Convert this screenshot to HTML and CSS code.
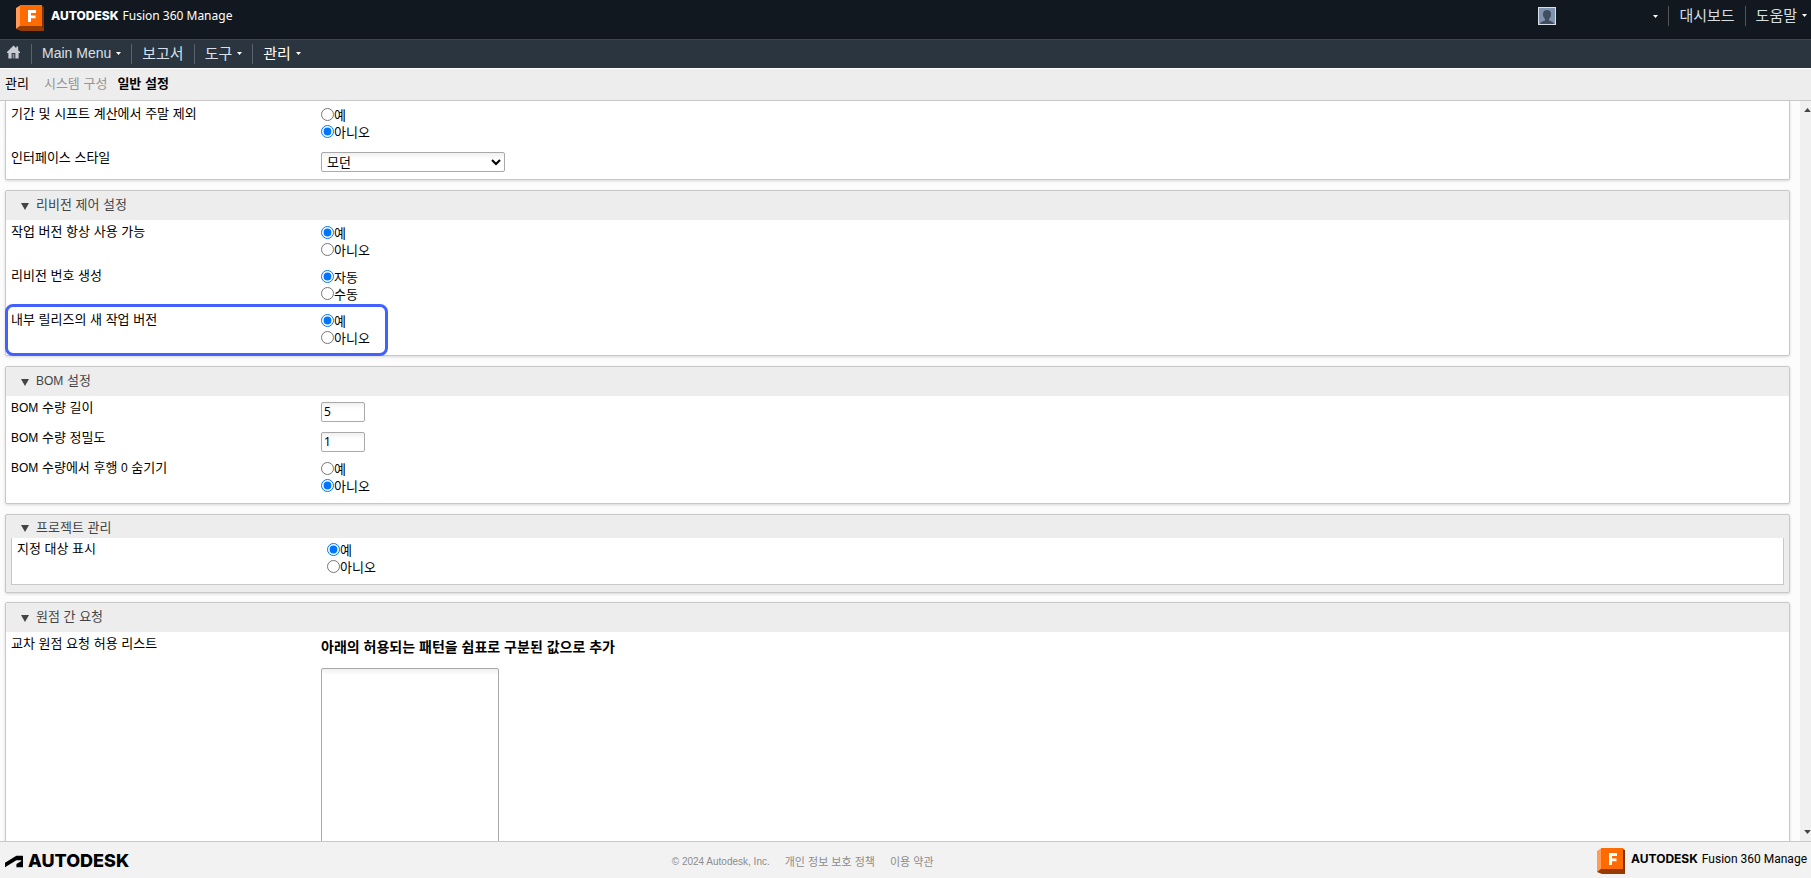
FILE: index.html
```html
<!DOCTYPE html>
<html lang="ko">
<head>
<meta charset="utf-8">
<title>Fusion 360 Manage</title>
<link rel="stylesheet" href="styles.css">
</head>
<body>
<svg class="defs" aria-hidden="true">
  <symbol id="fusion" viewBox="0 0 28 26">
    <path d="M0 3 5 0v21L0 24z" fill="#ff9c57"/>
    <path d="M0 24l5-4h21l2 0v6H5z" fill="#963c00"/>
    <path d="M26 1l2 1v22l-2-3z" fill="#7d3200"/>
    <path d="M4 0h22v21H4z" fill="#ff6b00"/>
    <path d="M12 5h8v3h-5v2.500h4.500v2.700H15V17h-3z" fill="#fff"/>
  </symbol>
  <symbol id="caret" viewBox="0 0 5 3"><path d="M0 0h5L2.500 3z" fill="currentColor"/></symbol>
  <symbol id="tri" viewBox="0 0 8 7"><path d="M0 0h8L4 7z" fill="currentColor"/></symbol>
</svg>

<header class="topbar">
  <a class="brand" href="#"><svg class="brand-icon"><use href="#fusion"/></svg><span class="brand-name">AUTODESK</span><span class="brand-product">Fusion 360 Manage</span></a>
  <div class="account">
    <button class="user" aria-label="사용자 메뉴">
      <svg class="avatar" viewBox="0 0 18 18"><path d="M0 0h18v18H0z" fill="#d9dfe6"/><path d="M1 1h16v16H1z" fill="#8094b0"/><path d="M2 17c0-2 2-2.500 5-3.500V12C5.500 10.500 5 9 5 7c0-2.500 1.500-4 4-4s4 1.500 4 4c0 2-.5 3.500-2 5v1.500c3 1 5 1.500 5 3.500z" fill="#414e60"/></svg>
      <svg class="caret"><use href="#caret"/></svg>
    </button>
    <a class="top-item" href="#">대시보드</a>
    <button class="top-item top-last">도움말<svg class="caret"><use href="#caret"/></svg></button>
  </div>
</header>

<nav class="nav">
  <a class="home" href="#" aria-label="홈"><svg class="home-icon" viewBox="0 0 14 14"><path d="M7 0 0 7v1h1.500v6H5V8h4v6h3.500V8H14V7l-2-2V1h-2v2z" fill="#c9ccd2"/><path d="M6 9h2v5H6z" fill="#858b95"/></svg></a>
  <button class="nav-item nav-latin">Main Menu<svg class="caret"><use href="#caret"/></svg></button>
  <a class="nav-item" href="#">보고서</a>
  <button class="nav-item">도구<svg class="caret"><use href="#caret"/></svg></button>
  <button class="nav-item nav-active">관리<svg class="caret"><use href="#caret"/></svg></button>
</nav>

<div class="crumbs"><a class="crumb" href="#">관리</a><span class="crumb crumb-muted">시스템 구성</span><strong class="crumb">일반 설정</strong></div>

<div class="viewport">
<main class="content">
  <section class="panel panel-first">
    <div class="row" role="radiogroup" aria-labelledby="l1">
      <div class="name" id="l1">기간 및 시프트 계산에서 주말 제외</div>
      <div class="options">
        <label class="option"><input type="radio" name="weekend">예</label>
        <label class="option"><input type="radio" name="weekend" checked>아니오</label>
      </div>
    </div>
    <div class="row row-field">
      <label class="name" for="style">인터페이스 스타일</label>
      <div class="field"><select class="select" id="style"><option>모던</option></select></div>
    </div>
  </section>

  <section class="panel">
    <h2 class="head"><svg class="tri"><use href="#tri"/></svg>리비전 제어 설정</h2>
    <div class="row" role="radiogroup" aria-labelledby="l2">
      <div class="name" id="l2">작업 버전 항상 사용 가능</div>
      <div class="options">
        <label class="option"><input type="radio" name="working" checked>예</label>
        <label class="option"><input type="radio" name="working">아니오</label>
      </div>
    </div>
    <div class="row" role="radiogroup" aria-labelledby="l3">
      <div class="name" id="l3">리비전 번호 생성</div>
      <div class="options">
        <label class="option"><input type="radio" name="numbering" checked>자동</label>
        <label class="option"><input type="radio" name="numbering">수동</label>
      </div>
    </div>
    <div class="row row-marked" role="radiogroup" aria-labelledby="l4">
      <div class="name" id="l4">내부 릴리즈의 새 작업 버전</div>
      <div class="options">
        <label class="option"><input type="radio" name="internal" checked>예</label>
        <label class="option"><input type="radio" name="internal">아니오</label>
      </div>
    </div>
  </section>

  <section class="panel">
    <h2 class="head"><svg class="tri"><use href="#tri"/></svg><span><span class="latin">BOM</span> 설정</span></h2>
    <div class="row row-field">
      <label class="name" for="len"><span class="latin">BOM</span> 수량 길이</label>
      <div class="field"><input class="text" id="len" type="text" value="5"></div>
    </div>
    <div class="row row-field">
      <label class="name" for="prec"><span class="latin">BOM</span> 수량 정밀도</label>
      <div class="field"><input class="text" id="prec" type="text" value="1"></div>
    </div>
    <div class="row" role="radiogroup" aria-labelledby="l5">
      <div class="name" id="l5"><span class="latin">BOM</span> 수량에서 후행 <span class="latin">0</span> 숨기기</div>
      <div class="options">
        <label class="option"><input type="radio" name="zeros">예</label>
        <label class="option"><input type="radio" name="zeros" checked>아니오</label>
      </div>
    </div>
  </section>

  <section class="panel panel-nested">
    <h2 class="head head-short"><svg class="tri"><use href="#tri"/></svg>프로젝트 관리</h2>
    <div class="inner">
      <div class="row" role="radiogroup" aria-labelledby="l6">
        <div class="name" id="l6">지정 대상 표시</div>
        <div class="options">
          <label class="option"><input type="radio" name="assignee" checked>예</label>
          <label class="option"><input type="radio" name="assignee">아니오</label>
        </div>
      </div>
    </div>
  </section>

  <section class="panel">
    <h2 class="head"><svg class="tri"><use href="#tri"/></svg>원점 간 요청</h2>
    <div class="row">
      <label class="name" for="origins">교차 원점 요청 허용 리스트</label>
      <div class="origins">
        <strong class="hint">아래의 허용되는 패턴을 쉼표로 구분된 값으로 추가</strong>
        <textarea class="area" id="origins"></textarea>
      </div>
    </div>
  </section>
</main>
<div class="scroll" aria-hidden="true"><svg class="arrow arrow-up"><use href="#caret"/></svg><svg class="arrow"><use href="#caret"/></svg></div>
</div>

<footer class="footer">
  <a class="autodesk" href="#"><svg class="mark" viewBox="0 0 20 13"><path d="M0 13 12.600 5.100h5c.3 0 .6.2.6.600 0 .3-.1.400-.4.500L13.100 9c-.3.200-.4.700-.4.900v3.100H20V.600c0-.3-.2-.6-.6-.6h-6.800L0 7.900z" fill="#000"/></svg>AUTODESK</a>
  <div class="legal"><span class="copy">© 2024 Autodesk, Inc.</span><a href="#">개인 정보 보호 정책</a><a href="#">이용 약관</a></div>
  <a class="brand brand-dark" href="#"><svg class="brand-icon"><use href="#fusion"/></svg><span class="brand-name">AUTODESK</span><span class="brand-product">Fusion 360 Manage</span></a>
</footer>
</body>
</html>
```
FILE: styles.css
```css
*, *::before, *::after { box-sizing: border-box; }
body {
  margin: 0;
  height: 100vh;
  display: flex;
  flex-direction: column;
  overflow: hidden;
  font: 13px/18px "Noto Sans CJK KR", "Noto Sans", sans-serif;
  color: #000;
  background: #fcfcfc;
}
a { color: inherit; text-decoration: none; }
button { font: inherit; color: inherit; background: none; border: 0; padding: 0; }
svg { display: block; flex: none; }
.defs { position: absolute; width: 0; height: 0; }
.caret { width: 5px; height: 3px; color: #fff; }

.topbar {
  flex: none;
  display: flex;
  justify-content: space-between;
  height: 40px;
  background: #11181f;
  border-bottom: 1px solid #444;
  color: #d7dde3;
}
.brand { display: flex; align-items: center; padding: 0 0 3px 16px; color: #fff; white-space: nowrap; }
.brand-icon { width: 28px; height: 26px; margin-right: 7px; }
.brand-name { font: 800 12px/16px Inter, sans-serif; margin-right: 4px; padding-bottom: 4px; }
.brand-product { font: 400 12px/16px "Noto Sans", sans-serif; padding-bottom: 4px; }
.account { display: flex; align-items: flex-start; padding-top: 6px; font-size: 15px; line-height: 18px; }
.user { display: flex; align-items: center; justify-content: space-between; width: 120px; height: 20px; margin-right: 10px; }
.avatar { width: 18px; height: 18px; }
.top-item { display: flex; align-items: center; height: 20px; padding: 0 10px 2px; border-left: 1px solid #555; }
.top-last { gap: 5px; padding-right: 4px; }

.nav { flex: none; display: flex; align-items: center; height: 28px; background: #2b3540; color: #d7e0ea; font-size: 15px; }
.home { padding: 0 11px 4px 7px; }
.home-icon { width: 13px; height: 14px; }
.nav-item { display: flex; align-items: center; gap: 5px; height: 20px; line-height: 18px; padding: 0 10px 2px; border-left: 1px solid #5a636d; }
.nav-latin { font: 14px/18px "Liberation Sans", sans-serif; }
.nav-active { color: #fff; }

.crumbs {
  flex: none;
  display: flex;
  align-items: center;
  height: 33px;
  padding: 0 0 3px 5px;
  background: #ededed;
  border-top: 1px solid #fff;
  border-bottom: 1px solid #c8c8c8;
}
.crumb-muted { color: #949494; margin: 0 10px 0 15px; }

.viewport { flex: 1; min-height: 0; display: flex; overflow: hidden; }
.content { flex: 1; min-width: 0; padding: 0 10px 0 5px; }
.scroll { flex: none; width: 11px; display: flex; flex-direction: column; justify-content: space-between; align-items: flex-end; padding: 7px 0; background: #f0f0f0; }
.arrow { width: 7px; height: 4px; color: #444; }
.arrow-up { transform: rotate(180deg); }

.panel {
  margin-bottom: 10px;
  padding-bottom: 3px;
  background: #fff;
  border: 1px solid #c8c8c8;
  border-radius: 2px;
  box-shadow: 0 1px 3px rgba(0, 0, 0, 0.15);
}
.panel-first { border-top: 0; border-radius: 0 0 2px 2px; padding-top: 1px; }
.head {
  display: flex;
  align-items: center;
  gap: 7px;
  height: 29px;
  margin: 0;
  padding: 0 0 3px 15px;
  font-size: 13px;
  font-weight: 400;
  color: #444;
  background: #ededed;
}
.tri { width: 8px; height: 7px; margin-top: 4px; }
.head-short { height: 23px; padding-bottom: 0; }
.panel-nested { padding: 0 5px 7px; margin-bottom: 9px; background: #ededed; }
.panel-nested .head { padding-left: 10px; }
.inner { background: #fff; border: 1px solid #c8c8c8; border-top: 0; padding-bottom: 2px; }

.row { display: grid; grid-template-columns: 310px 1fr; min-height: 44px; padding: 2px 5px 0; }
.row-field { min-height: 30px; }
.inner .row { padding-top: 1px; }
.row-marked { position: relative; }
.row-marked::after {
  content: "";
  position: absolute;
  left: -1px;
  top: -4px;
  width: 383px;
  height: 52px;
  border: 3px solid #4361ff;
  border-radius: 8px;
  pointer-events: none;
}
.options { padding-top: 2px; }
.option { display: flex; align-items: center; width: max-content; height: 17px; line-height: 17px; }
.option input { width: 13px; height: 13px; margin: 0; }
.latin { font-family: "Liberation Sans", sans-serif; font-size: 12px; }
.field { padding-top: 4px; }
.select, .text, .area {
  display: block;
  border: 1px solid #a9a9a9;
  border-radius: 2px;
  background: linear-gradient(#f0f0f0, #fff 6px);
  color: #000;
}
.select { width: 184px; height: 20px; padding: 0 1px; font: 13px "Liberation Sans", "Noto Sans CJK KR", sans-serif; }
.text { width: 44px; height: 20px; padding: 0 2px 2px; font: 12px/16px "Noto Sans", sans-serif; }
.origins { padding-top: 2px; }
.hint { display: block; font-size: 14px; line-height: 20px; margin-bottom: 12px; }
.area { width: 178px; height: 200px; resize: none; }

.footer {
  flex: none;
  display: grid;
  grid-template-columns: 37% auto 1fr;
  align-items: center;
  height: 37px;
  padding: 0 4px 0 5px;
  background: #f2f2f2;
  border-top: 1px solid #c8c8c8;
}
.autodesk { display: flex; align-items: center; gap: 5px; padding-top: 2px; font: 800 18px/20px Inter, sans-serif; }
.mark { width: 18px; height: 13px; }
.legal { display: flex; align-items: center; gap: 15px; padding-top: 1px; font-size: 11px; color: #8c8c8c; }
.copy { font: 10px/18px "Liberation Sans", sans-serif; padding-top: 2px; }
.brand-dark { color: #000; justify-self: end; padding: 2px 0 0; }
.brand-dark .brand-icon { margin-right: 6px; }
.brand-dark .brand-name { font-weight: 700; }
.brand-dark .brand-product { font: 400 12px/16px Roboto, sans-serif; }
```
